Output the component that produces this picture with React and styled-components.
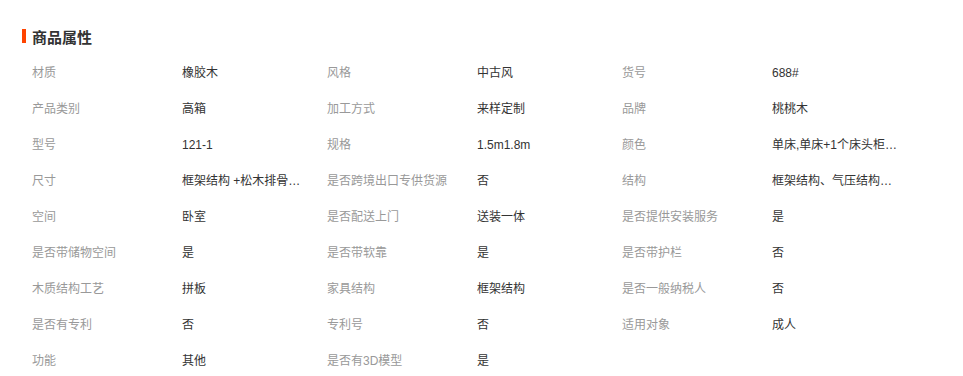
import React from 'react';
import styled, { createGlobalStyle } from 'styled-components';

const GlobalStyle = createGlobalStyle`
  body {
    margin: 0;
    background: #fff;
    font-family: "Liberation Sans", "Noto Sans CJK SC", sans-serif;
  }
`;

const Section = styled.div`
  padding: 24px 0 0 22px;
`;

const Title = styled.h3`
  display: flex;
  align-items: center;
  gap: 6px;
  margin: 0 0 7px 0;
  height: 24px;
  font-size: 15px;
  font-weight: bold;
  color: #333;
  &::before {
    content: '';
    width: 4px;
    height: 14px;
    background: #ff4400;
  }
`;

const Grid = styled.div`
  display: grid;
  grid-template-columns: repeat(3, 150px 145px);
  padding-left: 10px;
`;

const Cell = styled.div`
  height: 36px;
  line-height: 36px;
  font-size: 12px;
  color: ${(p) => (p.$label ? '#999' : '#333')};
  max-width: ${(p) => (p.$label ? 'none' : '126px')};
  white-space: nowrap;
  overflow: hidden;
  text-overflow: ellipsis;
`;

const attrs = [
  ['材质', '橡胶木'], ['风格', '中古风'], ['货号', '688#'],
  ['产品类别', '高箱'], ['加工方式', '来样定制'], ['品牌', '桃桃木'],
  ['型号', '121-1'], ['规格', '1.5m1.8m'], ['颜色', '单床,单床+1个床头柜,单床+2个床头柜'],
  ['尺寸', '框架结构 +松木排骨架 1.5m*2m'], ['是否跨境出口专供货源', '否'], ['结构', '框架结构、气压结构、抽屉结构'],
  ['空间', '卧室'], ['是否配送上门', '送装一体'], ['是否提供安装服务', '是'],
  ['是否带储物空间', '是'], ['是否带软靠', '是'], ['是否带护栏', '否'],
  ['木质结构工艺', '拼板'], ['家具结构', '框架结构'], ['是否一般纳税人', '否'],
  ['是否有专利', '否'], ['专利号', '否'], ['适用对象', '成人'],
  ['功能', '其他'], ['是否有3D模型', '是'],
];

function App() {
  return (
    <>
      <GlobalStyle />
      <Section>
        <Title>商品属性</Title>
        <Grid>
          {attrs.map(([label, value]) => (
            <React.Fragment key={label}>
              <Cell $label>{label}</Cell>
              <Cell>{value}</Cell>
            </React.Fragment>
          ))}
        </Grid>
      </Section>
    </>
  );
}

export default App;
